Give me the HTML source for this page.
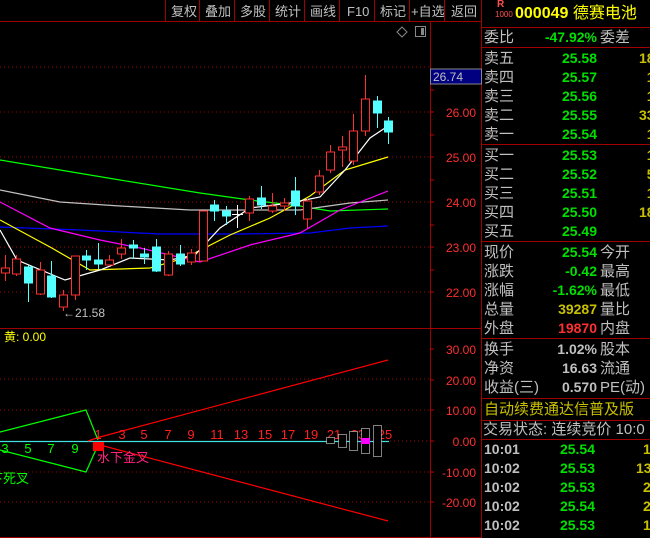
<!DOCTYPE html>
<html><head><meta charset="utf-8"><style>
*{margin:0;padding:0}
html,body{width:650px;height:538px;background:#000;overflow:hidden}
body{position:relative;font-family:"Liberation Sans","Noto Sans CJK SC",sans-serif}
.t{position:absolute;white-space:nowrap;line-height:19px;font-size:15px}
.l{color:#c0c0c0;left:484px}
.v{color:#00e000;font-weight:bold;font-size:14px;text-align:right;width:100px;left:497px}
.r{color:#c0c0c0;left:600px}
.y{color:#c8c000;font-weight:bold;font-size:14px;left:639px}
.hl{position:absolute;left:482px;width:168px;height:1px;background:#a00000}
.tm{color:#c0c0c0;font-weight:bold;font-size:14px;left:484px}
</style></head><body>
<svg width="482" height="538" style="position:absolute;left:0;top:0" font-family="Liberation Sans, Noto Sans CJK SC, sans-serif">
<line x1="0" y1="21.5" x2="482" y2="21.5" stroke="#a00000"/>
<g stroke="#a00000"><line x1="165.5" y1="0" x2="165.5" y2="21"/><line x1="199.5" y1="0" x2="199.5" y2="21"/><line x1="234.5" y1="0" x2="234.5" y2="21"/><line x1="269.5" y1="0" x2="269.5" y2="21"/><line x1="304.5" y1="0" x2="304.5" y2="21"/><line x1="339.5" y1="0" x2="339.5" y2="21"/><line x1="374.5" y1="0" x2="374.5" y2="21"/><line x1="409.5" y1="0" x2="409.5" y2="21"/><line x1="444.5" y1="0" x2="444.5" y2="21"/></g>
<g fill="#c0c0c0" font-size="13"><text x="171" y="16">复权</text><text x="205" y="16">叠加</text><text x="240" y="16">多股</text><text x="275" y="16">统计</text><text x="310" y="16">画线</text><text x="347" y="16">F10</text><text x="380" y="16">标记</text><text x="411" y="16">+自选</text><text x="451" y="16">返回</text></g>
<path d="M402 27 L407 32 L402 37 L397 32Z" fill="none" stroke="#888"/>
<rect x="415.5" y="26.5" width="10" height="10" fill="none" stroke="#888"/><rect x="421" y="28" width="3" height="7" fill="#888"/>
<line x1="430.5" y1="22" x2="430.5" y2="538" stroke="#a00000"/>
<line x1="481.5" y1="0" x2="481.5" y2="538" stroke="#a00000"/>
<line x1="0" y1="328.5" x2="482" y2="328.5" stroke="#a00000"/>
<line x1="0" y1="537.5" x2="482" y2="537.5" stroke="#a00000"/>
<rect x="430.5" y="69" width="51" height="15" fill="#000080" stroke="#888"/>
<text x="433" y="81" fill="#c0c0c0" font-size="12">26.74</text>
<g stroke="#a00000" stroke-dasharray="1,3"><line x1="0" y1="67" x2="430" y2="67"/><line x1="0" y1="112" x2="430" y2="112"/><line x1="0" y1="157" x2="430" y2="157"/><line x1="0" y1="202" x2="430" y2="202"/><line x1="0" y1="247" x2="430" y2="247"/><line x1="0" y1="292" x2="430" y2="292"/>
<line x1="0" y1="379" x2="430" y2="379"/><line x1="0" y1="410" x2="430" y2="410"/><line x1="0" y1="472" x2="430" y2="472"/><line x1="0" y1="502" x2="430" y2="502"/><line x1="390" y1="441" x2="430" y2="441"/></g>
<g stroke="#c00000"><line x1="430" y1="90" x2="434" y2="90"/><line x1="430" y1="112" x2="434" y2="112"/><line x1="430" y1="135" x2="434" y2="135"/><line x1="430" y1="157" x2="434" y2="157"/><line x1="430" y1="180" x2="434" y2="180"/><line x1="430" y1="202" x2="434" y2="202"/><line x1="430" y1="225" x2="434" y2="225"/><line x1="430" y1="247" x2="434" y2="247"/><line x1="430" y1="270" x2="434" y2="270"/><line x1="430" y1="292" x2="434" y2="292"/>
<line x1="430" y1="349" x2="434" y2="349"/><line x1="430" y1="380" x2="434" y2="380"/><line x1="430" y1="410" x2="434" y2="410"/><line x1="430" y1="441" x2="434" y2="441"/><line x1="430" y1="472" x2="434" y2="472"/><line x1="430" y1="502" x2="434" y2="502"/></g>
<g fill="#ff3030" font-size="12" text-anchor="end"><text x="476" y="117">26.00</text><text x="476" y="162">25.00</text><text x="476" y="207">24.00</text><text x="476" y="252">23.00</text><text x="476" y="297">22.00</text>
<text x="476" y="354">30.00</text><text x="476" y="385">20.00</text><text x="476" y="415">10.00</text><text x="476" y="446">0.00</text><text x="476" y="477">-10.00</text><text x="476" y="507">-20.00</text></g>
<g fill="none" stroke-width="1.2">
<polyline stroke="#00ff00" points="0,160 60,170 120,180 200,193 250,200 300,206 330,211 388,209"/>
<polyline stroke="#c0c0c0" points="0,190 60,202 120,206 190,210 300,210 350,203 388,200"/>
<polyline stroke="#0000ff" points="0,227 80,230 160,234 240,234 310,233 350,228 388,226"/>
<polyline stroke="#ff00ff" points="0,202 50,228 100,240 140,248 170,255 200,262 250,245 300,233 340,210 388,191"/>
<polyline stroke="#ffff00" points="0,220 50,247 90,270 150,268 185,258 230,235 270,218 310,196 345,170 388,157"/>
<polyline stroke="#ffffff" points="0,230 17,260 65,280 100,270 130,258 170,260 195,255 220,228 250,208 290,203 320,197 345,170 370,138 388,126"/>
</g>
<g stroke="#ff3030" fill="#000">
<line x1="5.5" y1="255" x2="5.5" y2="281"/><rect x="1.5" y="268" width="8" height="5"/>
<line x1="16.5" y1="255" x2="16.5" y2="276"/><rect x="12.5" y="259" width="8" height="15"/>
<line x1="40.5" y1="262" x2="40.5" y2="295"/><rect x="36.5" y="270" width="8" height="24"/>
<line x1="63.5" y1="290" x2="63.5" y2="311"/><rect x="59.5" y="295" width="8" height="12"/>
<line x1="75.5" y1="256" x2="75.5" y2="300"/><rect x="71.5" y="256" width="8" height="39"/>
<line x1="109.5" y1="255" x2="109.5" y2="266"/><rect x="105.5" y="260" width="8" height="5"/>
<line x1="121.5" y1="239" x2="121.5" y2="259"/><rect x="117.5" y="248" width="8" height="6"/>
<line x1="168.5" y1="251" x2="168.5" y2="276"/><rect x="164.5" y="254" width="8" height="21"/>
<line x1="191.5" y1="249" x2="191.5" y2="265"/><rect x="187.5" y="253" width="8" height="9"/>
<rect x="199.5" y="211" width="8" height="50"/>
<line x1="249.5" y1="196" x2="249.5" y2="221"/><rect x="245.5" y="199" width="8" height="14"/>
<line x1="272.5" y1="193" x2="272.5" y2="213"/><rect x="268.5" y="206" width="8" height="5"/>
<line x1="284.5" y1="198" x2="284.5" y2="211"/><rect x="280.5" y="203" width="8" height="3"/>
<line x1="307.5" y1="199" x2="307.5" y2="228"/><rect x="303.5" y="201" width="8" height="18"/>
<line x1="319.5" y1="170" x2="319.5" y2="195"/><rect x="315.5" y="176" width="8" height="16"/>
<line x1="330.5" y1="145" x2="330.5" y2="173"/><rect x="326.5" y="152" width="8" height="18"/>
<line x1="342.5" y1="136" x2="342.5" y2="167"/><rect x="338.5" y="147" width="8" height="3"/>
<line x1="353.5" y1="114" x2="353.5" y2="165"/><rect x="349.5" y="131" width="8" height="30"/>
<line x1="365.5" y1="75" x2="365.5" y2="136"/><rect x="361.5" y="99" width="8" height="32"/>
</g>
<g stroke="#54ffff" fill="#54ffff">
<line x1="28.5" y1="265" x2="28.5" y2="302"/><rect x="24.5" y="267" width="8" height="16"/>
<line x1="51.5" y1="261" x2="51.5" y2="298"/><rect x="47.5" y="276" width="8" height="21"/>
<line x1="86.5" y1="250" x2="86.5" y2="270"/><rect x="82.5" y="256" width="8" height="4"/>
<line x1="98.5" y1="243" x2="98.5" y2="269"/><rect x="94.5" y="260" width="8" height="4"/>
<line x1="133.5" y1="240" x2="133.5" y2="259"/><rect x="129.5" y="245" width="8" height="3"/>
<line x1="144.5" y1="248" x2="144.5" y2="264"/><rect x="140.5" y="254" width="8" height="3"/>
<line x1="156.5" y1="239" x2="156.5" y2="272"/><rect x="152.5" y="247" width="8" height="24"/>
<line x1="180.5" y1="245" x2="180.5" y2="266"/><rect x="176.5" y="254" width="8" height="10"/>
<line x1="214.5" y1="200" x2="214.5" y2="221"/><rect x="210.5" y="205" width="8" height="6"/>
<line x1="226.5" y1="206" x2="226.5" y2="225"/><rect x="222.5" y="211" width="8" height="5"/>
<line x1="261.5" y1="186" x2="261.5" y2="209"/><rect x="257.5" y="198" width="8" height="7"/>
<line x1="295.5" y1="177" x2="295.5" y2="215"/><rect x="291.5" y="191" width="8" height="15"/>
<line x1="377.5" y1="96" x2="377.5" y2="128"/><rect x="373.5" y="101" width="8" height="12"/>
<line x1="388.5" y1="117" x2="388.5" y2="144"/><rect x="384.5" y="121" width="8" height="11"/>
</g>
<g stroke="#fff"><line x1="237.5" y1="205" x2="237.5" y2="228"/><line x1="232" y1="214.5" x2="243" y2="214.5"/></g>
<text x="63" y="317" fill="#c0c0c0" font-size="12">←21.58</text>
<text x="4" y="341" fill="#ffff00" font-size="12">黄: 0.00</text>
<line x1="0" y1="441.5" x2="389" y2="441.5" stroke="#40e0e0" stroke-width="1.2"/>
<g fill="none" stroke="#ff0000" stroke-width="1.2"><polyline points="88,441 100,437 388,360"/><polyline points="100,445 388,521"/></g>
<g fill="none" stroke="#00ff00" stroke-width="1.2"><polyline points="0,432 86,410 98,440"/><polyline points="0,450 86,472 98,445"/></g>
<rect x="93" y="442" width="11" height="9" fill="#ff0000"/>
<g fill="#ff2020" font-size="13" text-anchor="middle"><text x="98" y="439">1</text><text x="122" y="439">3</text><text x="144" y="439">5</text><text x="168" y="439">7</text><text x="191" y="439">9</text><text x="217" y="439">11</text><text x="241" y="439">13</text><text x="265" y="439">15</text><text x="288" y="439">17</text><text x="311" y="439">19</text><text x="334" y="439">21</text><text x="358" y="439">23</text><text x="385" y="439">25</text></g>
<g fill="#00ff00" font-size="13" text-anchor="middle"><text x="5" y="453">3</text><text x="28" y="453">5</text><text x="51" y="453">7</text><text x="75" y="453">9</text></g>
<text x="97" y="462" fill="#ff2080" font-size="13">水下金叉</text>
<text x="-10" y="483" fill="#00ff00" font-size="13">下死叉</text>
<g fill="#000" stroke="#fff" stroke-dasharray="1,1"><rect x="326.5" y="437.5" width="8" height="6"/><rect x="338.5" y="434.5" width="8" height="13"/><rect x="349.5" y="431.5" width="8" height="19"/><rect x="361.5" y="428.5" width="8" height="25"/><rect x="373.5" y="425.5" width="8" height="31"/></g>
<rect x="361" y="438" width="9" height="6" fill="#ff00ff"/>
</svg>

<div class="t" style="left:497px;top:-1px;color:#ff5050;font-size:10px;font-weight:bold;line-height:11px">R</div>
<div class="t" style="left:495px;top:10px;color:#ff5050;font-size:8px;line-height:10px">1000</div>
<div class="t" style="left:515px;top:4px;color:#ffff00;font-size:16px;font-weight:bold">000049 <span style="font-weight:normal">德赛电池</span></div>
<div class="hl" style="top:27px"></div>
<div class="t l" style="top:28px">委比</div><div class="t v" style="top:28px">-47.92%</div><div class="t r" style="top:28px">委差</div>
<div class="hl" style="top:47px"></div>
<div class="t l" style="top:49px">卖五</div><div class="t v" style="top:49px">25.58</div><div class="t y" style="top:49px">18</div>
<div class="t l" style="top:68px">卖四</div><div class="t v" style="top:68px">25.57</div><div class="t y" style="top:68px">&nbsp;&nbsp;1</div>
<div class="t l" style="top:87px">卖三</div><div class="t v" style="top:87px">25.56</div><div class="t y" style="top:87px">&nbsp;&nbsp;1</div>
<div class="t l" style="top:106px">卖二</div><div class="t v" style="top:106px">25.55</div><div class="t y" style="top:106px">33</div>
<div class="t l" style="top:125px">卖一</div><div class="t v" style="top:125px">25.54</div><div class="t y" style="top:125px">&nbsp;&nbsp;1</div>
<div class="hl" style="top:144px"></div>
<div class="t l" style="top:146px">买一</div><div class="t v" style="top:146px">25.53</div><div class="t y" style="top:146px">&nbsp;&nbsp;1</div>
<div class="t l" style="top:165px">买二</div><div class="t v" style="top:165px">25.52</div><div class="t y" style="top:165px">&nbsp;&nbsp;5</div>
<div class="t l" style="top:184px">买三</div><div class="t v" style="top:184px">25.51</div><div class="t y" style="top:184px">&nbsp;&nbsp;1</div>
<div class="t l" style="top:203px">买四</div><div class="t v" style="top:203px">25.50</div><div class="t y" style="top:203px">18</div>
<div class="t l" style="top:222px">买五</div><div class="t v" style="top:222px">25.49</div>
<div class="hl" style="top:241px"></div>
<div class="t l" style="top:243px">现价</div><div class="t v" style="top:243px">25.54</div><div class="t r" style="top:243px">今开</div>
<div class="t l" style="top:262px">涨跌</div><div class="t v" style="top:262px">-0.42</div><div class="t r" style="top:262px">最高</div>
<div class="t l" style="top:281px">涨幅</div><div class="t v" style="top:281px">-1.62%</div><div class="t r" style="top:281px">最低</div>
<div class="t l" style="top:300px">总量</div><div class="t v" style="top:300px;color:#c8c000">39287</div><div class="t r" style="top:300px">量比</div>
<div class="t l" style="top:319px">外盘</div><div class="t v" style="top:319px;color:#ff3030">19870</div><div class="t r" style="top:319px">内盘</div>
<div class="hl" style="top:338px"></div>
<div class="t l" style="top:340px">换手</div><div class="t v" style="top:340px;color:#c0c0c0">1.02%</div><div class="t r" style="top:340px">股本</div>
<div class="t l" style="top:359px">净资</div><div class="t v" style="top:359px;color:#c0c0c0">16.63</div><div class="t r" style="top:359px">流通</div>
<div class="t l" style="top:378px">收益(三)</div><div class="t v" style="top:378px;color:#c0c0c0">0.570</div><div class="t r" style="top:378px">PE(动)</div>
<div class="hl" style="top:398px"></div>
<div class="t" style="left:484px;top:400px;color:#c8c000">自动续费通达信普及版</div>
<div class="hl" style="top:420px"></div>
<div class="t" style="left:483px;top:420px;color:#c0c0c0">交易状态: 连续竞价 10:0</div>
<div class="hl" style="top:439px"></div>
<div class="t tm" style="top:440px">10:01</div><div class="t v" style="top:440px;left:495px">25.54</div><div class="t y" style="top:440px;left:643px">1</div>
<div class="t tm" style="top:459px">10:02</div><div class="t v" style="top:459px;left:495px">25.53</div><div class="t y" style="top:459px;left:636px">13</div>
<div class="t tm" style="top:478px">10:02</div><div class="t v" style="top:478px;left:495px">25.53</div><div class="t y" style="top:478px;left:643px">2</div>
<div class="t tm" style="top:497px">10:02</div><div class="t v" style="top:497px;left:495px">25.54</div><div class="t y" style="top:497px;left:643px">2</div>
<div class="t tm" style="top:516px">10:02</div><div class="t v" style="top:516px;left:495px">25.53</div><div class="t y" style="top:516px;left:643px">1</div>
<div class="t tm" style="top:535px">10:02</div><div class="t v" style="top:535px;left:495px">25.54</div>
</body></html>
